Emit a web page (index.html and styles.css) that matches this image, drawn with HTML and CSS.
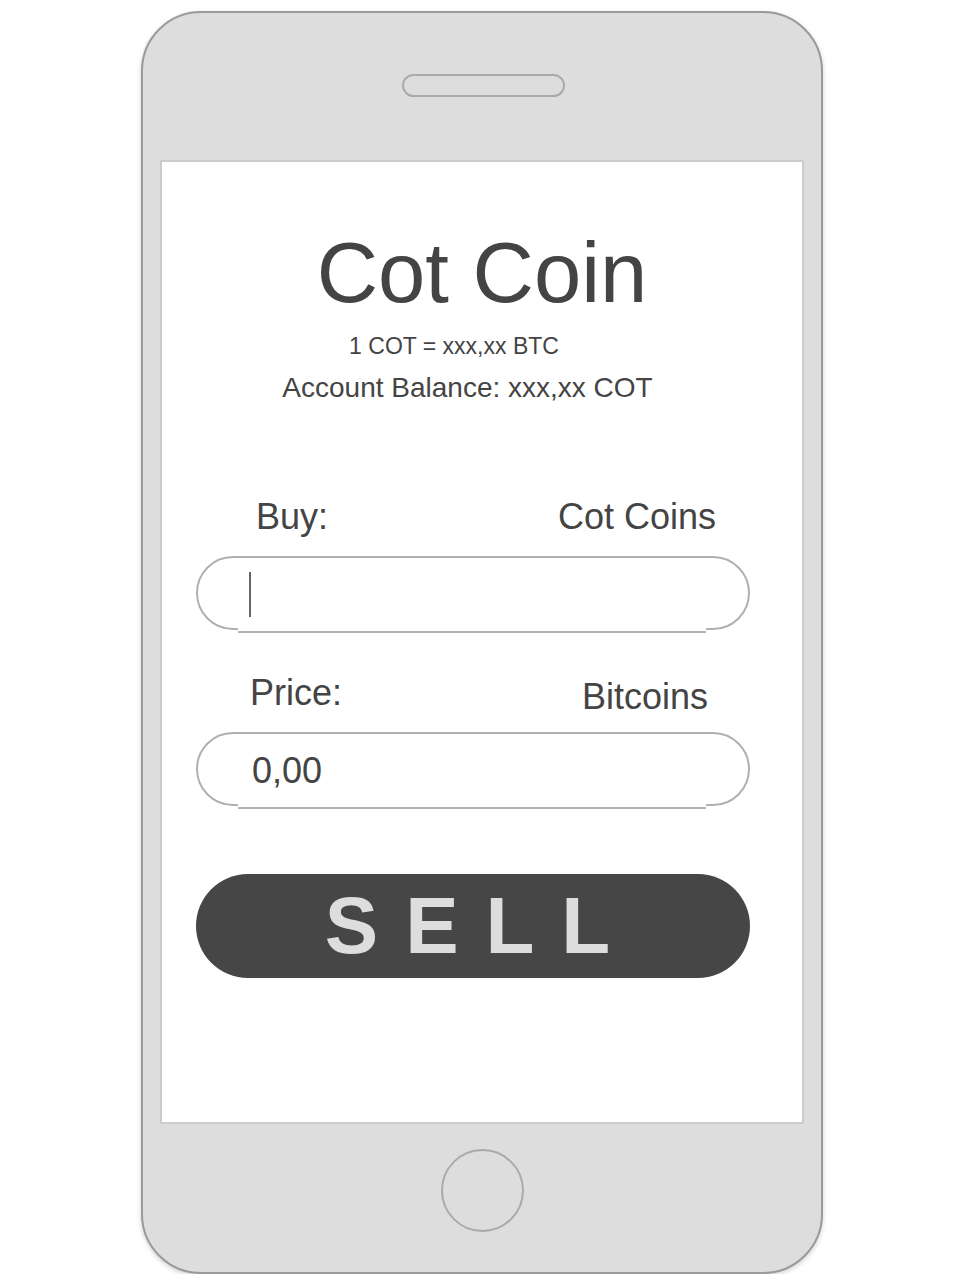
FILE: index.html
```html
<!DOCTYPE html>
<html lang="en">
<head>
<meta charset="utf-8">
<title>Cot Coin</title>
<link rel="stylesheet" href="styles.css">
</head>
<body>
<div class="phone">
  <div class="phone-top">
    <div class="speaker"></div>
  </div>
  <div class="screen">
    <h1 class="title">Cot Coin</h1>
    <p class="rate">1 COT = xxx,xx BTC</p>
    <p class="balance">Account Balance: xxx,xx COT</p>
    <div class="form">
      <div class="label-row label-row-buy">
        <span>Buy:</span>
        <span>Cot Coins</span>
      </div>
      <div class="field field-buy">
        <span class="cursor"></span>
      </div>
      <div class="label-row label-row-price">
        <span>Price:</span>
        <span class="unit-low">Bitcoins</span>
      </div>
      <div class="field field-price">
        <span class="field-value">0,00</span>
      </div>
      <div class="sell-button">SELL</div>
    </div>
  </div>
  <div class="phone-bottom">
    <div class="home-button"></div>
  </div>
</div>
</body>
</html>
```

FILE: styles.css
```css
html, body {
  margin: 0;
  padding: 0;
  background: #ffffff;
}

body {
  font-family: "Liberation Sans", Arial, sans-serif;
  color: #444444;
}

.phone {
  margin: 11px 0 0 141px;
  width: 682px;
  height: 1263px;
  box-sizing: border-box;
  border: 2px solid #9a9a9a;
  border-radius: 60px;
  background: #dddddd;
  box-shadow: 0 2px 5px rgba(0, 0, 0, 0.18);
  padding: 0 17px;
  display: flex;
  flex-direction: column;
}

.phone-top {
  height: 147px;
  box-sizing: border-box;
  padding-top: 61px;
  display: flex;
  justify-content: center;
}

.speaker {
  width: 163px;
  height: 23px;
  box-sizing: border-box;
  border: 2px solid #aaaaaa;
  border-radius: 12px;
  margin-left: 3px;
}

.screen {
  width: 644px;
  height: 964px;
  box-sizing: border-box;
  border: 2px solid #cccccc;
  background: #ffffff;
  display: flex;
  flex-direction: column;
}

.title {
  margin: 68px 0 0 0;
  font-size: 85px;
  line-height: 1;
  font-weight: normal;
  text-align: center;
  color: #444444;
}

.rate {
  margin: 20px 0 0 0;
  padding-right: 56px;
  font-size: 23px;
  line-height: 1;
  text-align: center;
}

.balance {
  margin: 16px 0 0 0;
  padding-right: 29px;
  font-size: 28px;
  line-height: 1;
  text-align: center;
}

.form {
  margin: 95px 52px 0 34px;
  display: flex;
  flex-direction: column;
}

.label-row {
  display: flex;
  justify-content: space-between;
  align-items: flex-start;
  font-size: 36px;
  line-height: 40px;
  height: 40px;
}

.label-row-buy {
  padding: 0 34px 0 60px;
}

.label-row-price {
  margin-top: 43px;
  padding: 0 42px 0 54px;
}

.unit-low {
  margin-top: 4px;
}

.field {
  position: relative;
  height: 74px;
  box-sizing: border-box;
  border: 2px solid #b0b0b0;
  border-radius: 37px;
  background: #ffffff;
}

.field::after {
  content: "";
  position: absolute;
  left: 40px;
  right: 42px;
  bottom: -5px;
  height: 3px;
  background: #ffffff;
  border-bottom: 2px solid #b0b0b0;
}

.field-buy {
  margin-top: 19px;
  display: flex;
  align-items: flex-start;
  padding: 14px 0 0 51px;
}

.cursor {
  width: 2px;
  height: 45px;
  background: #666666;
}

.field-price {
  margin-top: 19px;
  padding: 3px 0 0 54px;
}

.field-value {
  display: block;
  font-size: 36px;
  line-height: 68px;
  color: #444444;
}

.sell-button {
  margin-top: 68px;
  height: 104px;
  border-radius: 52px;
  background: #464646;
  color: #dddddd;
  font-weight: bold;
  font-size: 80px;
  line-height: 1;
  letter-spacing: 27px;
  display: flex;
  align-items: center;
  justify-content: center;
  padding-left: 16px;
}

.phone-bottom {
  flex: 1;
  box-sizing: border-box;
  padding-top: 25px;
  display: flex;
  justify-content: center;
}

.home-button {
  width: 83px;
  height: 83px;
  box-sizing: border-box;
  border: 2px solid #aaaaaa;
  border-radius: 50%;
}
```
